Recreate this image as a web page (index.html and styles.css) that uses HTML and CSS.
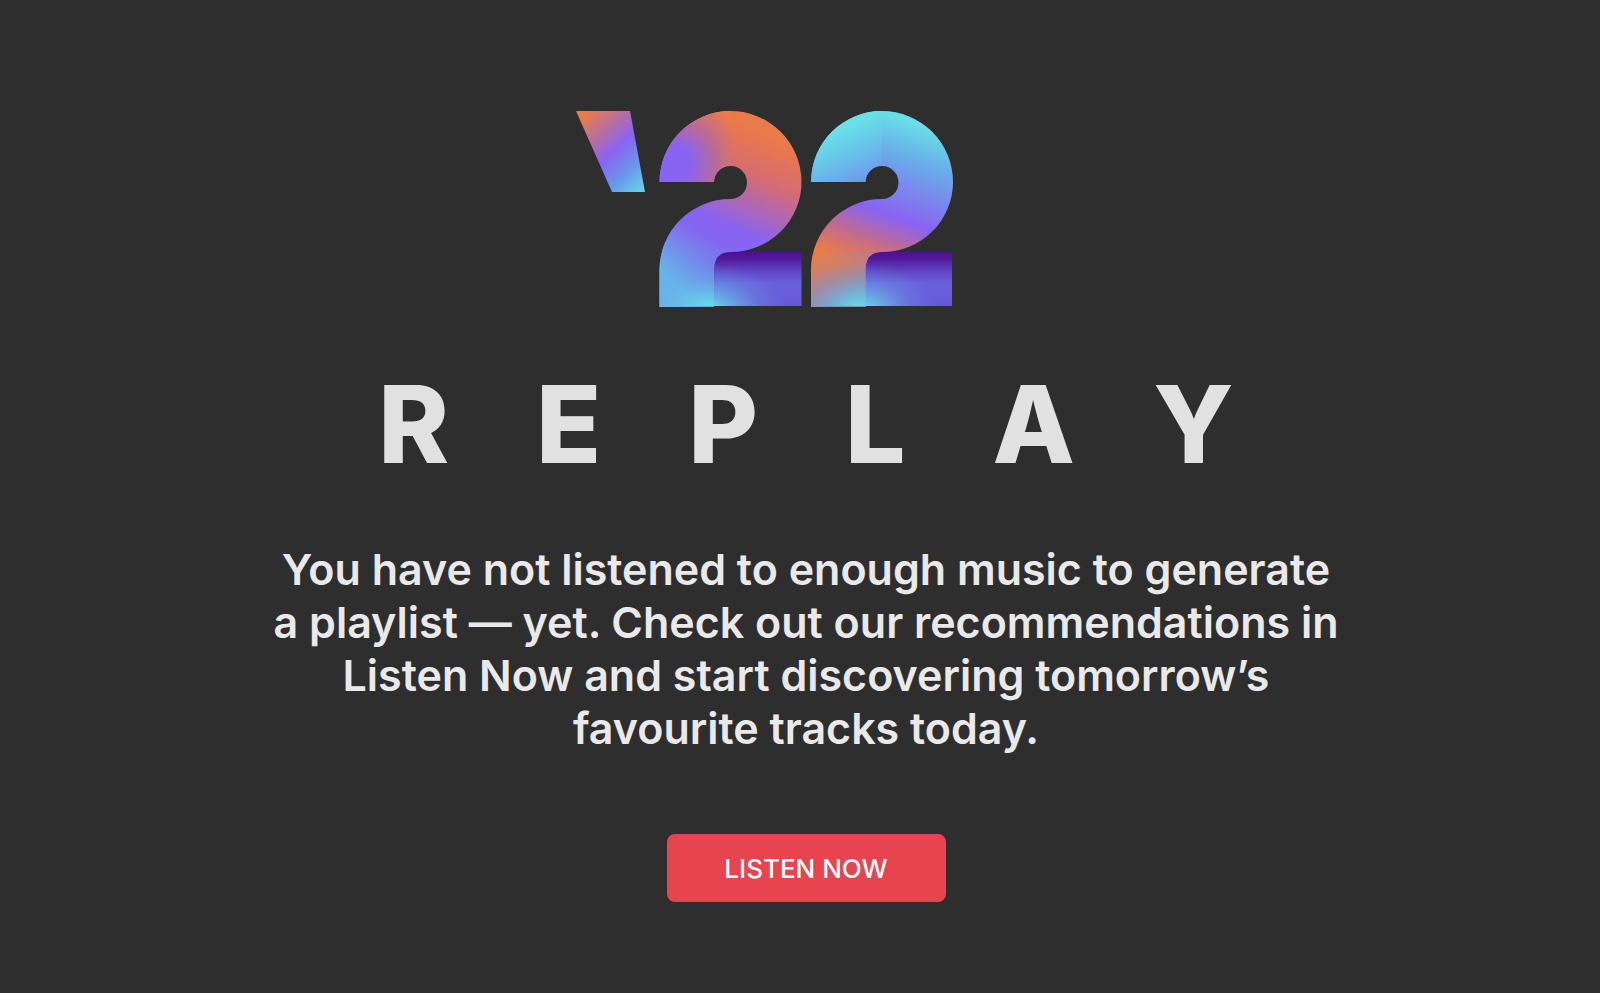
FILE: index.html
```
<!DOCTYPE html>
<html lang="en">
<head>
    <meta charset="UTF-8">
    <meta name="viewport" content="width=device-width, initial-scale=1">
    <title>Replay '22</title>
    <link rel="stylesheet" href="styles.css">
</head>
<body>

    <main class="replay">
        <svg class="logo" viewBox="576 110 460 198" role="img" aria-label="'22">
            <defs>
                <linearGradient id="tick" gradientUnits="userSpaceOnUse" x1="583" y1="116" x2="646" y2="184">
                    <stop offset="0" stop-color="#ec7b46"/>
                    <stop offset="0.5" stop-color="#8963f2"/>
                    <stop offset="0.78" stop-color="#6799ec"/>
                    <stop offset="1" stop-color="#67cfe8"/>
                </linearGradient>
                <linearGradient id="bodyWarm" gradientUnits="userSpaceOnUse" x1="764" y1="134" x2="690" y2="300">
                    <stop offset="0" stop-color="#ea7a49"/>
                    <stop offset="0.22" stop-color="#d86c70"/>
                    <stop offset="0.54" stop-color="#8963f2"/>
                    <stop offset="0.65" stop-color="#8466f1"/>
                    <stop offset="0.88" stop-color="#659fea"/>
                    <stop offset="1" stop-color="#67b8ea"/>
                </linearGradient>
                <linearGradient id="blueLeft" gradientUnits="userSpaceOnUse" x1="661" y1="270" x2="702" y2="226">
                    <stop offset="0" stop-color="#67b4ea"/>
                    <stop offset="1" stop-color="#8070ea" stop-opacity="0"/>
                </linearGradient>
                <radialGradient id="topWarm" gradientUnits="userSpaceOnUse" cx="673" cy="164" r="72">
                    <stop offset="0.25" stop-color="#8963f2"/>
                    <stop offset="0.6" stop-color="#b86a9a"/>
                    <stop offset="1" stop-color="#ec7b46"/>
                </radialGradient>
                <linearGradient id="bodyCool" gradientUnits="userSpaceOnUse" x1="890" y1="115" x2="838" y2="258">
                    <stop offset="0" stop-color="#69dde8"/>
                    <stop offset="0.22" stop-color="#69aeea"/>
                    <stop offset="0.62" stop-color="#8963f2"/>
                    <stop offset="0.8" stop-color="#be6b92"/>
                    <stop offset="1" stop-color="#ee7c43"/>
                </linearGradient>
                <linearGradient id="topCool" gradientUnits="userSpaceOnUse" x1="854" y1="124" x2="884" y2="186">
                    <stop offset="0" stop-color="#69dfe8"/>
                    <stop offset="0.45" stop-color="#68bce9"/>
                    <stop offset="1" stop-color="#7185ef"/>
                </linearGradient>
                <linearGradient id="stemCool" gradientUnits="userSpaceOnUse" x1="816" y1="252" x2="838" y2="304">
                    <stop offset="0" stop-color="#a9839c" stop-opacity="0.05"/>
                    <stop offset="1" stop-color="#8a8ab8"/>
                </linearGradient>
                <linearGradient id="bar" x1="0" y1="0" x2="0" y2="1">
                    <stop offset="0" stop-color="#500f90"/>
                    <stop offset="0.12" stop-color="#52189a"/>
                    <stop offset="0.35" stop-color="#5f44c2"/>
                    <stop offset="0.58" stop-color="#6861dd"/>
                    <stop offset="1" stop-color="#6658d6"/>
                </linearGradient>
                <radialGradient id="glow" gradientUnits="userSpaceOnUse" cx="0" cy="0" r="1" gradientTransform="translate(710 308) scale(76 44)">
                    <stop offset="0" stop-color="#67dfe8"/>
                    <stop offset="0.3" stop-color="#67d0e8" stop-opacity="0.65"/>
                    <stop offset="0.65" stop-color="#67b0ea" stop-opacity="0.28"/>
                    <stop offset="1" stop-color="#67a0ea" stop-opacity="0"/>
                </radialGradient>
                <linearGradient id="fold" gradientUnits="userSpaceOnUse" x1="675" y1="262" x2="722" y2="250">
                    <stop offset="0" stop-color="#7a6cec" stop-opacity="0"/>
                    <stop offset="1" stop-color="#7a6cec" stop-opacity="0.7"/>
                </linearGradient>
                <path id="two" d="M659.500 182A71 71 0 0 1 801.500 182A71 70 0 0 1 730.500 252Q714 252 714 270V307H659.500V270A71 71 0 0 1 730.500 199A16.500 16.500 0 1 0 714 182Z"/>
                <path id="quarter" d="M659.500 182A71 71 0 0 1 730.500 111V165.500A16.500 16.500 0 0 0 714 182Z"/>
            </defs>

            <path fill="url(#tick)" d="M576 111H630L645 192H612Z"/>

            <!-- first digit -->
            <rect fill="url(#bar)" x="712" y="252" width="89.500" height="54"/>
            <use href="#two" fill="url(#bodyWarm)"/>
            <use href="#two" fill="url(#blueLeft)"/>
            <use href="#quarter" fill="url(#topWarm)"/>
            <path fill="url(#fold)" d="M675 252H730.500Q714 252 714 270V307H675Z" opacity="0.4"/>
            <rect fill="url(#glow)" x="659.500" y="252" width="142" height="54"/>

            <!-- second digit -->
            <g transform="translate(151.500 0)">
                <rect fill="url(#bar)" x="712" y="252" width="88.500" height="54"/>
            </g>
            <path fill="url(#bodyCool)" d="M811 182A71 71 0 0 1 953 182A71 70 0 0 1 882 252Q865.500 252 865.500 270V307H811V270A71 71 0 0 1 882 199A16.500 16.500 0 1 0 865.500 182Z"/>
            <path fill="url(#topCool)" d="M811 182A71 71 0 0 1 882 111V165.500A16.500 16.500 0 0 0 865.500 182Z"/>
            <path fill="url(#stemCool)" d="M811 252H882Q865.500 252 865.500 270V307H811Z"/>
            <g transform="translate(151.500 0)">
                <rect fill="url(#glow)" x="659.500" y="252" width="141" height="54"/>
            </g>
        </svg>

        <h1 class="title">REPLAY</h1>

        <p class="message">You have not listened to enough music to generate a playlist — yet. Check out our recommendations in Listen Now and start discovering tomorrow’s favourite tracks today.</p>

        <button type="button" class="listen">LISTEN NOW</button>
    </main>

</body>
</html>
```
FILE: styles.css
```
body {
    margin: 0;
    background-color: #2e2e2e;
    color: #e9e9e9;
    font-family: Inter, "Liberation Sans", sans-serif;
}

.replay {
    display: flex;
    flex-direction: column;
    align-items: center;
    padding: 110px 20px 80px 32px;
}

.logo {
    display: block;
    width: 460px;
    max-width: 100%;
}

.title {
    margin: 51px 0 0;
    padding-left: 87px;
    color: #e1e1e1;
    font-size: 107px;
    font-weight: 800;
    line-height: 130px;
    letter-spacing: 87px;
}

.message {
    max-width: 1072px;
    margin: 54px 0 0;
    font-size: 43px;
    font-weight: 600;
    line-height: 53px;
    text-align: center;
}

.listen {
    min-width: 279px;
    height: 68px;
    margin-top: 79px;
    padding: 0 40px;
    border: none;
    border-radius: 8px;
    background-color: #e7444f;
    color: white;
    font-family: inherit;
    font-size: 26px;
    font-weight: 500;
    cursor: pointer;
}

.listen:hover {
    background-color: #d63a45;
}
```
